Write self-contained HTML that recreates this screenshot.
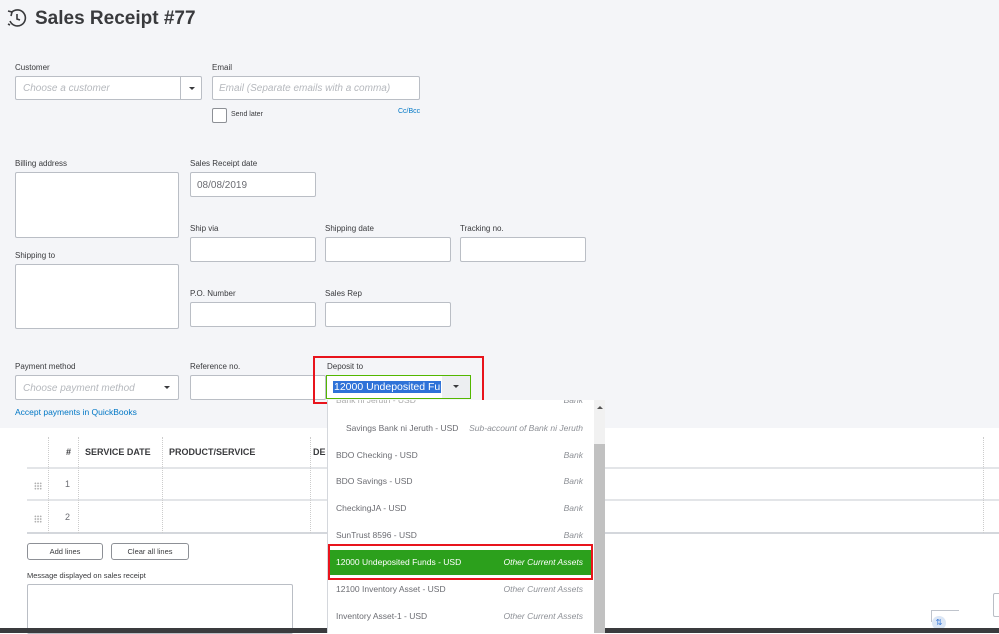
<!DOCTYPE html><html><head><style>
*{margin:0;padding:0;box-sizing:border-box}
body{width:999px;height:633px;overflow:hidden;position:relative;font-family:"Liberation Sans",sans-serif;background:#fff;color:#393a3d}
.a{position:absolute}
.lbl{position:absolute;font-size:8px;color:#393a3d}
.box{position:absolute;background:#fff;border:1px solid #babec5;border-radius:2px}
.ph{font-size:10px;color:#b5b8bd;font-style:italic;position:absolute}
.it{position:absolute;left:8px;right:22px;font-size:8.5px;color:#6b6c72;display:flex;justify-content:space-between}
.it i{color:#8d9096}
.dots{position:absolute;width:8px;height:8px;background-image:radial-gradient(circle,#aaa 0.7px,transparent 0.8px);background-size:2.7px 2.7px}
</style></head><body>
<div class="a" style="left:0;top:0;width:999px;height:428px;background:#f4f5f8"></div>
<svg class="a" style="left:6px;top:8px" width="22" height="20" viewBox="0 0 22 20" fill="none" stroke="#393a3d" stroke-width="1.6"><path d="M4 13 A8 8 0 1 0 6 4"/><path d="M2 3 L6 4 L5 8"/><path d="M11 6 V11 L14 12"/><path d="M2 16 L4 17"/></svg>
<div class="a" style="left:35px;top:8px;font-size:19px;font-weight:bold;color:#393a3d">Sales Receipt #77</div>

<div class="lbl" style="left:15px;top:63px">Customer</div>
<div class="box" style="left:15px;top:76px;width:187px;height:24px"><span class="ph" style="left:7px;top:6px">Choose a customer</span><div class="a" style="left:164px;top:0;width:1px;height:22px;background:#babec5"></div><div class="a" style="left:173px;top:10px;border:3px solid transparent;border-top:3px solid #393a3d"></div></div>
<div class="lbl" style="left:212px;top:63px">Email</div>
<div class="box" style="left:212px;top:76px;width:208px;height:24px"><span class="ph" style="left:6px;top:6px">Email (Separate emails with a comma)</span></div>
<div class="box" style="left:212px;top:108px;width:15px;height:15px;border-color:#8d9096"></div>
<div class="lbl" style="left:231px;top:111px;font-size:7px">Send later</div>
<div class="lbl" style="left:398px;top:108px;font-size:7px;color:#0077c5">Cc/Bcc</div>

<div class="lbl" style="left:15px;top:159px">Billing address</div>
<div class="box" style="left:15px;top:172px;width:164px;height:66px"></div>
<div class="lbl" style="left:190px;top:159px">Sales Receipt date</div>
<div class="box" style="left:190px;top:172px;width:126px;height:25px"><span class="a" style="left:6px;top:7px;font-size:10px;color:#6b6c72">08/08/2019</span></div>
<div class="lbl" style="left:190px;top:224px">Ship via</div>
<div class="box" style="left:190px;top:237px;width:126px;height:25px"></div>
<div class="lbl" style="left:325px;top:224px">Shipping date</div>
<div class="box" style="left:325px;top:237px;width:126px;height:25px"></div>
<div class="lbl" style="left:460px;top:224px">Tracking no.</div>
<div class="box" style="left:460px;top:237px;width:126px;height:25px"></div>
<div class="lbl" style="left:15px;top:251px">Shipping to</div>
<div class="box" style="left:15px;top:264px;width:164px;height:65px"></div>
<div class="lbl" style="left:190px;top:289px">P.O. Number</div>
<div class="box" style="left:190px;top:302px;width:126px;height:25px"></div>
<div class="lbl" style="left:325px;top:289px">Sales Rep</div>
<div class="box" style="left:325px;top:302px;width:126px;height:25px"></div>

<div class="lbl" style="left:15px;top:362px">Payment method</div>
<div class="box" style="left:15px;top:375px;width:164px;height:25px"><span class="ph" style="left:7px;top:7px">Choose payment method</span><div class="a" style="left:148px;top:10px;border:3px solid transparent;border-top:3px solid #393a3d"></div></div>
<div class="lbl" style="left:190px;top:362px">Reference no.</div>
<div class="box" style="left:190px;top:375px;width:136px;height:25px"></div>
<div class="a" style="left:313px;top:356px;width:171px;height:48px;border:2px solid #e8141c"></div>
<div class="lbl" style="left:327px;top:362px">Deposit to</div>
<div class="a" style="left:326px;top:375px;width:145px;height:24px;border:1px solid #53b700;background:#fff"><span class="a" style="left:6px;top:5px;font-size:10.5px;background:#2f72d8;color:#fff;padding:0 1px;white-space:nowrap;width:108px;overflow:hidden">12000 Undeposited Fun</span><div class="a" style="left:115px;top:0;width:28px;height:22px;background:#eceef1"></div><div class="a" style="left:126px;top:9px;border:3px solid transparent;border-top:3px solid #393a3d"></div></div>
<div class="a" style="left:15px;top:407px;font-size:8.5px;color:#0077c5">Accept payments in QuickBooks</div>

<div class="a" style="left:27px;top:437px;width:972px;height:97px">
<div class="a" style="left:0;top:30px;width:972px;height:2px;background:#e3e5e8"></div>
<div class="a" style="left:0;top:62px;width:972px;height:2px;background:#e3e5e8"></div>
<div class="a" style="left:0;top:95px;width:972px;height:2px;background:#d4d7dc"></div>
<div class="a" style="left:21px;top:0;width:1px;height:96px;border-left:1px dotted #ccc"></div>
<div class="a" style="left:51px;top:0;width:1px;height:96px;border-left:1px dotted #ccc"></div>
<div class="a" style="left:135px;top:0;width:1px;height:96px;border-left:1px dotted #ccc"></div>
<div class="a" style="left:283px;top:0;width:1px;height:96px;border-left:1px dotted #ccc"></div>
<div class="a" style="left:956px;top:0;width:1px;height:96px;border-left:1px dotted #ccc"></div>
<div class="a" style="left:39px;top:10px;font-size:9px;font-weight:bold">#</div>
<div class="a" style="left:58px;top:10px;font-size:9px;font-weight:bold">SERVICE DATE</div>
<div class="a" style="left:142px;top:10px;font-size:9px;font-weight:bold">PRODUCT/SERVICE</div>
<div class="a" style="left:286px;top:10px;font-size:9px;font-weight:bold">DE</div>
<div class="a" style="left:38px;top:42px;font-size:9px;color:#6b6c72">1</div>
<div class="a" style="left:38px;top:75px;font-size:9px;color:#6b6c72">2</div>
<div class="dots" style="left:7px;top:45px"></div>
<div class="dots" style="left:7px;top:78px"></div>
</div>
<div class="a" style="left:27px;top:543px;width:76px;height:17px;border:1px solid #8d9096;border-radius:3px;font-size:7.5px;text-align:center;line-height:15px">Add lines</div>
<div class="a" style="left:111px;top:543px;width:78px;height:17px;border:1px solid #8d9096;border-radius:3px;font-size:7.5px;text-align:center;line-height:15px">Clear all lines</div>
<div class="lbl" style="left:27px;top:571px;font-size:7.5px">Message displayed on sales receipt</div>
<div class="box" style="left:27px;top:584px;width:266px;height:50px"></div>
<div class="a" style="left:993px;top:593px;width:10px;height:24px;border:1px solid #babec5;border-radius:2px"></div>
<div class="a" style="left:931px;top:610px;width:1px;height:12px;background:#bfc4cc"></div>
<div class="a" style="left:931px;top:610px;width:28px;height:1px;background:#bfc4cc"></div>
<div class="a" style="left:932px;top:616px;width:14px;height:14px;border-radius:50%;background:#dbe6f5;font-size:8px;color:#2f72d8;text-align:center;line-height:14px">⇅</div>
<div class="a" style="left:0;top:628px;width:999px;height:5px;background:#3a3b3e"></div>

<div class="a" style="left:327px;top:400px;width:278px;height:233px;background:#fff;border-left:1px solid #d4d7dc;overflow:hidden">
<div class="a" style="left:266px;top:0;width:11px;height:233px;background:#f1f1f1"></div>
<div class="a" style="left:266px;top:44px;width:11px;height:189px;background:#c1c1c1"></div>
<div class="a" style="left:269px;top:3px;border:3px solid transparent;border-bottom:3px solid #555"></div>
<div class="it" style="top:-5px;color:#aaa"><span>Bank ni Jeruth - USD</span><i>Bank</i></div>
<div class="it" style="top:23px;padding-left:10px"><span>Savings Bank ni Jeruth - USD</span><i>Sub-account of Bank ni Jeruth</i></div>
<div class="it" style="top:50px"><span>BDO Checking - USD</span><i>Bank</i></div>
<div class="it" style="top:76px"><span>BDO Savings - USD</span><i>Bank</i></div>
<div class="it" style="top:103px"><span>CheckingJA - USD</span><i>Bank</i></div>
<div class="it" style="top:130px"><span>SunTrust 8596 - USD</span><i>Bank</i></div>
<div class="a" style="left:0;top:144px;width:265px;height:36px;border:2px solid #e8141c"></div>
<div class="a" style="left:2px;top:150px;width:261px;height:25px;background:#2ca01c"></div>
<div class="it" style="top:157px;color:#fff"><span>12000 Undeposited Funds - USD</span><i style="color:#fff">Other Current Assets</i></div>
<div class="it" style="top:184px"><span>12100 Inventory Asset - USD</span><i>Other Current Assets</i></div>
<div class="it" style="top:211px"><span>Inventory Asset-1 - USD</span><i>Other Current Assets</i></div>
</div>
</body></html>
